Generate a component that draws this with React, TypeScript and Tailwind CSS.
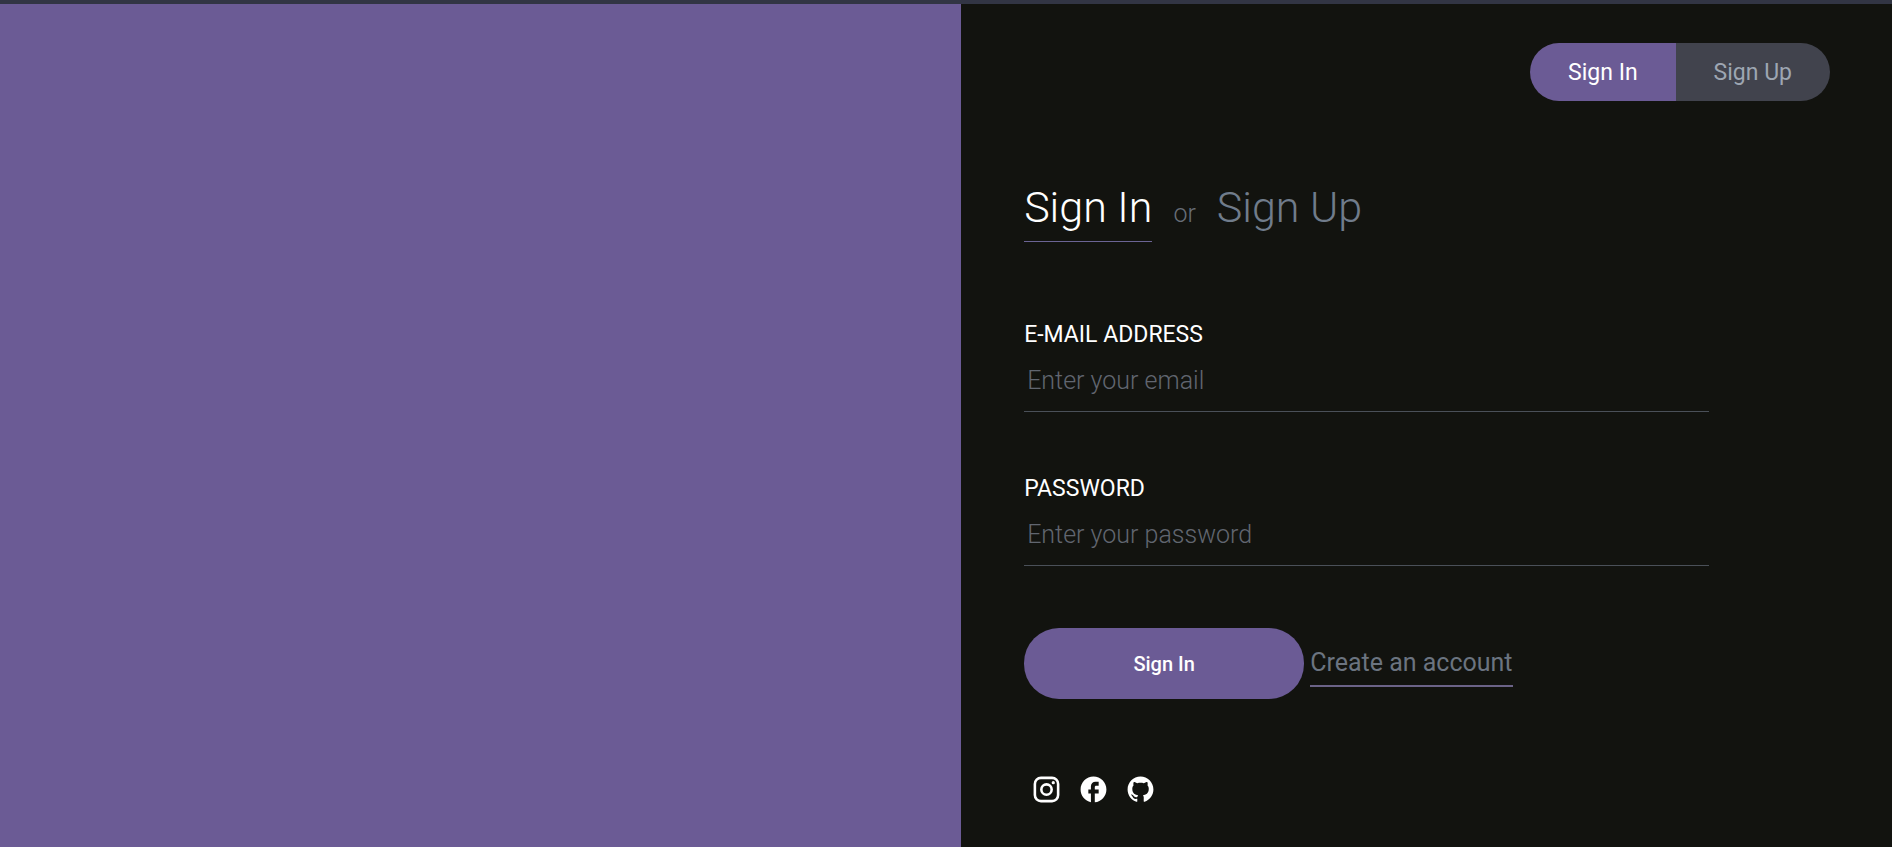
import { useState } from "react";
import { MdFacebook } from "react-icons/md";
import { RiGithubFill } from "react-icons/ri";

const fields = [
  { id: "email", label: "E-Mail Address", type: "email", placeholder: "Enter your email" },
  { id: "password", label: "Password", type: "password", placeholder: "Enter your password" },
];

function InstagramIcon({ size }: { size: number }) {
  return (
    <svg width={size} height={size} viewBox="0 0 24 24" fill="none" stroke="currentColor" strokeWidth="2" aria-hidden="true">
      <rect x="3" y="3" width="18" height="18" rx="4.7" />
      <circle cx="12" cy="12" r="4" />
      <circle cx="17.25" cy="6.75" r="1.25" fill="currentColor" stroke="none" />
    </svg>
  );
}

const socials = [
  { name: "Instagram", Icon: InstagramIcon },
  { name: "Facebook", Icon: MdFacebook },
  { name: "GitHub", Icon: RiGithubFill },
];

export default function App() {
  const [values, setValues] = useState<Record<string, string>>({});

  return (
    <div className="flex min-h-screen flex-col bg-[#12130f] font-[Roboto,sans-serif] text-white">
      <div className="h-1 bg-[#323544]" />
      <div className="flex flex-1">
        <aside className="w-[50.8%] bg-[#6b5b95]" />
        <main className="flex-1 px-[62px] pt-[39px] pl-[63px]">
          <nav className="flex justify-end text-[23px] leading-[26px]">
            <a href="#signin" className="rounded-l-[30px] bg-[#6b5b95] px-[38px] pt-[17px] pb-[15px]">
              Sign In
            </a>
            <a href="#signup" className="rounded-r-[30px] bg-[#41434d] px-[38px] pt-[17px] pb-[15px] text-[#9da6b2]">
              Sign Up
            </a>
          </nav>

          <div className="mt-20 flex items-baseline font-light text-[#707c8b]">
            <a href="#signin" className="border-b border-[#6b6494] pb-2 text-[43px] leading-[52px] text-white">
              Sign In
            </a>
            <span className="mx-[21px] text-[25px] text-[#676d76]">or</span>
            <a href="#signup" className="text-[43px] leading-[52px]">
              Sign Up
            </a>
          </div>

          <form className="mt-[79px]" onSubmit={(e) => e.preventDefault()}>
            {fields.map((f) => (
              <div key={f.id} className="mb-[63px] w-[85%]">
                <label htmlFor={f.id} className="block text-[23px] leading-7 uppercase">
                  {f.label}
                </label>
                <input
                  id={f.id}
                  type={f.type}
                  placeholder={f.placeholder}
                  value={values[f.id] ?? ""}
                  onChange={(e) => setValues({ ...values, [f.id]: e.target.value })}
                  className="mt-3 block w-full border-b border-[#4a5058] bg-transparent px-[3px] pt-[5px] pb-[15px] text-[25px] leading-[30px] font-light outline-none placeholder:text-[#616670]"
                />
              </div>
            ))}
            <div className="-mt-px flex items-center gap-[6px]">
              <button type="submit" className="w-[280px] rounded-[35px] bg-[#6b5b95] pt-[23px] pb-[21px] text-[20px] leading-[27px] font-medium">
                Sign In
              </button>
              <a href="#signup" className="border-b-2 border-[#6b6387] pt-[7px] pb-[7px] text-[25px] leading-[30px] text-[#6b7480]">
                Create an account
              </a>
            </div>
          </form>

          <div className="mt-[75px] flex gap-4 px-[7px]">
            {socials.map(({ name, Icon }) => (
              <a key={name} href={`#${name.toLowerCase()}`} aria-label={name}>
                <Icon size={31} />
              </a>
            ))}
          </div>
        </main>
      </div>
    </div>
  );
}
